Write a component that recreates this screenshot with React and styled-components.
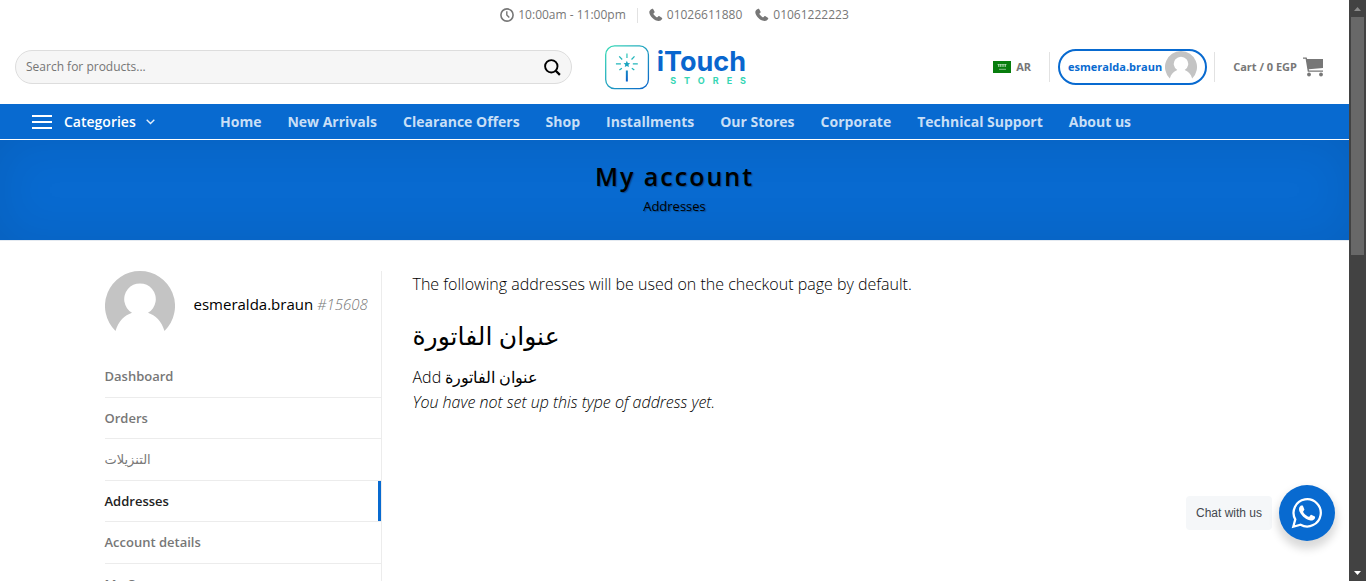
import React from 'react';
import styled, { createGlobalStyle } from 'styled-components';

const BLUE = '#086ad0';

const GlobalStyle = createGlobalStyle`
  *, *::before, *::after { box-sizing: border-box; }
  body {
    margin: 0;
    background: #fff;
    color: #000;
    font-family: 'Open Sans', 'Noto Sans', 'DejaVu Sans', sans-serif;
    font-size: 15px;
    line-height: 25px;
  }
  a { color: inherit; text-decoration: none; }
  h1, h2, p, ul { margin: 0; padding: 0; }
  ul { list-style: none; }
  button { font: inherit; color: inherit; border: 0; background: none; padding: 0; cursor: pointer; }
`;

const Viewport = styled.div`
  display: flex;
  height: 100vh;
  overflow: hidden;
`;

const Page = styled.div`
  flex: 1;
  min-width: 0;
  overflow: hidden;
`;

const ScrollTrack = styled.div`
  flex: none;
  width: 17px;
  display: flex;
  flex-direction: column;
  align-items: center;
  background: #424242;
`;

const ScrollArrow = styled.svg`
  flex: none;
  width: 17px;
  height: 17px;
`;

const ScrollThumb = styled.div`
  width: 13px;
  height: 41%;
  background: #686868;
`;

const ScrollSpace = styled.div`
  flex: 1;
`;

const TopBar = styled.div`
  display: flex;
  justify-content: center;
  align-items: center;
  height: 30px;
  color: #777;
  font-size: 12px;
  line-height: 16px;
`;

const TopItem = styled.a`
  display: flex;
  align-items: center;
  gap: 4px;
  margin-left: ${(p) => p.$gap || 0}px;
`;

const Divider = styled.span`
  flex: none;
  width: 1px;
  height: ${(p) => p.$height}px;
  background: #e2e2e2;
`;

const Header = styled.header`
  display: grid;
  grid-template-columns: 1fr 141px 1fr;
  column-gap: 33px;
  align-items: center;
  height: 74px;
  padding: 0 13px 0 15px;
`;

const SearchForm = styled.form`
  display: flex;
  align-items: center;
  height: 34px;
  padding: 0 10px;
  border: 1px solid #ddd;
  border-radius: 99px;
  background: #f6f6f6;
`;

const SearchInput = styled.input`
  flex: 1;
  min-width: 0;
  border: 0;
  padding: 0;
  outline: 0;
  background: transparent;
  font: inherit;
  font-size: 12px;
  line-height: 20px;
  color: #333;
  &::placeholder { color: #757575; opacity: 1; }
`;

const IconButton = styled.button`
  display: flex;
`;

const Logo = styled.a`
  display: flex;
  align-items: center;
  gap: 7px;
`;

const LogoWords = styled.span`
  display: flex;
  flex-direction: column;
  align-items: flex-end;
  font-family: Inter, sans-serif;
  font-weight: 700;
`;

const LogoName = styled.span`
  color: #0966ce;
  font-size: 27px;
  line-height: 26px;
`;

const LogoSub = styled.span`
  color: #35d6b4;
  font-size: 9px;
  line-height: 11px;
  letter-spacing: 8px;
  margin-right: -8px;
`;

const HeaderTools = styled.div`
  display: flex;
  justify-content: flex-end;
  align-items: center;
  padding-right: 12px;
  color: #777;
  font-size: 11px;
  font-weight: 700;
  line-height: 16px;
`;

const Language = styled.a`
  display: flex;
  align-items: center;
  gap: 5px;
  margin-right: 18px;
`;

const AccountLink = styled.a`
  display: flex;
  align-items: center;
  gap: 3px;
  height: 36px;
  margin: 0 7px 0 8px;
  padding: 0 8px;
  border: 2px solid ${BLUE};
  border-radius: 99px;
  color: ${BLUE};
`;

const CartLink = styled.a`
  display: flex;
  align-items: center;
  gap: 6px;
  margin-left: 18px;
`;

const NavBar = styled.nav`
  display: flex;
  align-items: center;
  height: 36px;
  padding-left: 32px;
  border-bottom: 1px solid #fff;
  background: ${BLUE};
  color: #fff;
  font-size: 14px;
  font-weight: 700;
  line-height: 20px;
`;

const Categories = styled.button`
  display: flex;
  align-items: center;
  width: 188px;
  font-weight: 600;
`;

const CategoriesLabel = styled.span`
  margin: 0 10px 0 12px;
`;

const NavList = styled.ul`
  display: flex;
  gap: 26px;
  color: #c9dff6;
`;

const TitleBand = styled.section`
  height: 101px;
  padding-top: 18px;
  border-bottom: 1px solid #e4eaf1;
  background: ${BLUE};
  box-shadow: inset 0 0 50px rgba(0, 0, 0, 0.09);
  text-align: center;
  text-shadow: 1px 1px 1px rgba(0, 0, 0, 0.3);
`;

const PageTitle = styled.h1`
  font-size: 25px;
  font-weight: 600;
  line-height: 36px;
  letter-spacing: 2px;
`;

const PageSubtitle = styled.p`
  font-size: 13px;
  line-height: 24px;
`;

const Content = styled.main`
  display: flex;
  max-width: 1140px;
  margin: 30px auto 0;
`;

const Sidebar = styled.aside`
  flex: none;
  width: 277px;
  border-right: 1px solid #ececec;
`;

const Profile = styled.div`
  display: flex;
  align-items: center;
  gap: 19px;
  height: 70px;
  margin-bottom: 14px;
  white-space: nowrap;
`;

const UserName = styled.span`
  padding-bottom: 4px;
`;

const UserId = styled.em`
  color: #777;
  font-weight: 300;
`;

const AccountMenu = styled.ul`
  display: grid;
  grid-auto-rows: 1fr;
  height: 249px;
  color: #777;
  font-size: 13px;
  font-weight: 600;
  line-height: 20px;
`;

const MenuItem = styled.li`
  display: flex;
  align-items: center;
  border-top: 1px solid ${(p) => (p.$first ? 'transparent' : '#ececec')};
  box-shadow: ${(p) => (p.$active ? `inset -3px 0 0 ${BLUE}` : 'none')};
  color: ${(p) => (p.$active ? '#222' : 'inherit')};
  font-weight: ${(p) => (p.$regular ? 400 : 'inherit')};
`;

const AddressPanel = styled.section`
  flex: 1;
  min-width: 0;
  padding: 1px 0 0 31px;
  font-size: 16px;
  font-weight: 300;
`;

const AddressTitle = styled.h2`
  margin: 19px 0 11px;
  font-size: 25px;
  font-weight: 500;
  line-height: 38px;
`;

const ChatWidget = styled.div`
  position: fixed;
  right: 31px;
  bottom: 40px;
  display: flex;
  align-items: center;
  gap: 7px;
`;

const ChatLabel = styled.span`
  padding: 7px 10px;
  border-radius: 4px;
  background: #f5f7f9;
  color: #43474e;
  font-family: 'Liberation Sans', Arial, sans-serif;
  font-size: 12px;
  line-height: 20px;
`;

const ChatButton = styled.button`
  display: flex;
  align-items: center;
  justify-content: center;
  width: 56px;
  height: 56px;
  border-radius: 50%;
  background: ${BLUE};
  box-shadow: 0 6px 8px 2px rgba(0, 0, 0, 0.15);
`;

function ClockIcon() {
  return (
    <svg width="14" height="14" viewBox="0 0 14 14" fill="none" stroke="#777">
      <circle cx="7" cy="7" r="6.1" strokeWidth="1.6" />
      <path d="M6.8 3.2V7l2.5 2.6" strokeWidth="1.4" />
    </svg>
  );
}

function PhoneIcon() {
  return (
    <svg width="14" height="14" viewBox="0 0 14 14" fill="#777">
      <path d="M2.800.9c.5-.4 1-.3 1.300.2l1.400 2.300c.3.5.2 1-.2 1.300l-.8.7c-.2.3-.2.6 0 .9.8 1.200 1.800 2.100 3 2.900.3.200.6.200.9 0l.8-.8c.4-.4.9-.4 1.300-.1l2.300 1.500c.5.3.6.9.3 1.300-.8 1.200-2.100 2.100-3.400 2C5.500 12.800.5 8 .3 4.200.2 2.800 1.400 1.600 2.800.9Z" />
    </svg>
  );
}

function SearchIcon() {
  return (
    <svg width="17" height="17" viewBox="0 0 17 17" fill="none" stroke="#000" strokeWidth="1.9">
      <circle cx="7.300" cy="7.300" r="6.200" />
      <path d="m11.700 11.700 4.200 4.200" strokeWidth="2.300" />
    </svg>
  );
}

function LogoMark() {
  return (
    <svg width="45" height="45" viewBox="0 0 45 45" fill="none">
      <defs>
        <linearGradient id="frame" x1="0" y1="0" x2="45" y2="45" gradientUnits="userSpaceOnUse">
          <stop stopColor="#39dfb5" />
          <stop offset="1" stopColor="#0860cc" />
        </linearGradient>
        <linearGradient id="wand" x1="0" y1="8" x2="0" y2="37" gradientUnits="userSpaceOnUse">
          <stop stopColor="#2bcbb5" />
          <stop offset="1" stopColor="#075dcc" />
        </linearGradient>
      </defs>
      <rect x=".7" y=".7" width="43" height="43" rx="9" stroke="url(#frame)" strokeWidth="1.300" />
      <path d="M21 25.500h2v11h-2zM21.500 8.500h1.200v4.500h-1.200z" fill="url(#wand)" />
      <path d="m14.300 11.300 3 3.200M29.700 11.300l-3 3.200M11 18.900h5M28 18.900h5M14.500 25l2.500-1.800M29.500 25l-2.500-1.800" stroke="#22b6bb" strokeWidth="1.300" />
      <path d="m22 15.800 1 2.100 2.300.3-1.700 1.600.5 2.300-2.100-1.100-2.100 1.100.5-2.300-1.700-1.600 2.300-.3z" fill="#1ba5c0" />
    </svg>
  );
}

function SaudiFlag() {
  return (
    <svg width="18" height="12" viewBox="0 0 18 12">
      <rect width="18" height="12" fill="#077d0d" />
      <path d="M4.500 3.500h9M5 5h8M5.500 3v2.800M7.500 3v2.800M10 3v2.800M12.500 3v2.800" stroke="#b9dcba" strokeWidth=".7" />
      <path d="M6 8.300h7" stroke="#a7d2a9" strokeWidth=".8" />
    </svg>
  );
}

function Avatar({ size }) {
  return (
    <svg width={size} height={size} viewBox="0 0 70 70">
      <path d="M35 0a35 35 0 0 1 24.500 60C56.500 50 50.500 44.500 43 41.800a15.800 15.800 0 1 0-16 0C19.500 44.500 13.500 50 10.500 60A35 35 0 0 1 35 0Z" fill="#c4c4c4" />
    </svg>
  );
}

function CartIcon() {
  return (
    <svg width="21" height="20" viewBox="0 0 21 20" fill="#777">
      <path d="M0 .5h3.700l.4 1.500H20v9L5.800 12.300l.2 1.200h14v1.300H4.800L2.600 1.800H0z" />
      <circle cx="6" cy="17.500" r="1.900" />
      <circle cx="18" cy="17.500" r="1.900" />
    </svg>
  );
}

function MenuIcon() {
  return (
    <svg width="20" height="14" viewBox="0 0 20 14" fill="#fff">
      <path d="M0 0h20v2H0zM0 6h20v2H0zM0 12h20v2H0z" />
    </svg>
  );
}

function ChevronIcon() {
  return (
    <svg width="9" height="6" viewBox="0 0 9 6" fill="none" stroke="#e4effb" strokeWidth="1.400">
      <path d="m.7.700 3.800 3.800L8.300.7" />
    </svg>
  );
}

function WhatsAppIcon() {
  return (
    <svg width="32" height="32" viewBox="0 0 24 24" fill="#fff">
      <path d="M17.472 14.382c-.297-.149-1.758-.867-2.030-.967-.273-.099-.471-.148-.67.150-.197.297-.767.966-.940 1.164-.173.199-.347.223-.644.075-.297-.150-1.255-.463-2.390-1.475-.883-.788-1.480-1.761-1.653-2.059-.173-.297-.018-.458.130-.606.134-.133.298-.347.446-.520.149-.174.198-.298.298-.497.099-.198.050-.371-.025-.520-.075-.149-.669-1.612-.916-2.207-.242-.579-.487-.500-.669-.510-.173-.008-.371-.010-.570-.010-.198 0-.520.074-.792.372-.272.297-1.040 1.016-1.040 2.479 0 1.462 1.065 2.875 1.213 3.074.149.198 2.096 3.200 5.077 4.487.709.306 1.262.489 1.694.625.712.227 1.360.195 1.871.118.571-.085 1.758-.719 2.006-1.413.248-.694.248-1.289.173-1.413-.074-.124-.272-.198-.570-.347" />
      <path d="m1.700 22.300 1.500-5.500A10.200 10.200 0 1 1 7.200 20.800z" fill="none" stroke="#fff" strokeWidth="1.700" />
    </svg>
  );
}

const NAV = ['Home', 'New Arrivals', 'Clearance Offers', 'Shop', 'Installments', 'Our Stores', 'Corporate', 'Technical Support', 'About us'];

const MENU = [
  { label: 'Dashboard' },
  { label: 'Orders' },
  { label: 'التنزيلات', regular: true },
  { label: 'Addresses', active: true },
  { label: 'Account details' },
  { label: 'My Coupons' },
];

export default function App() {
  return (
    <>
      <GlobalStyle />
      <Viewport>
        <Page>
          <TopBar>
            <TopItem href="#hours"><ClockIcon />10:00am - 11:00pm</TopItem>
            <TopItem as="span" $gap={11}><Divider $height={15} /></TopItem>
            <TopItem href="tel:01026611880" $gap={11}><PhoneIcon />01026611880</TopItem>
            <TopItem href="tel:01061222223" $gap={13}><PhoneIcon />01061222223</TopItem>
          </TopBar>
          <Header>
            <SearchForm role="search" onSubmit={(e) => e.preventDefault()}>
              <SearchInput type="search" aria-label="Search for products" placeholder="Search for products..." />
              <IconButton type="submit" aria-label="Search"><SearchIcon /></IconButton>
            </SearchForm>
            <Logo href="#home">
              <LogoMark />
              <LogoWords>
                <LogoName>iTouch</LogoName>
                <LogoSub>STORES</LogoSub>
              </LogoWords>
            </Logo>
            <HeaderTools>
              <Language href="#ar"><SaudiFlag />AR</Language>
              <Divider $height={30} />
              <AccountLink href="#account">esmeralda.braun<Avatar size={32} /></AccountLink>
              <Divider $height={30} />
              <CartLink href="#cart">Cart / 0 EGP<CartIcon /></CartLink>
            </HeaderTools>
          </Header>
          <NavBar>
            <Categories type="button">
              <MenuIcon />
              <CategoriesLabel>Categories</CategoriesLabel>
              <ChevronIcon />
            </Categories>
            <NavList>
              {NAV.map((label) => (
                <li key={label}><a href="#nav">{label}</a></li>
              ))}
            </NavList>
          </NavBar>
          <TitleBand>
            <PageTitle>My account</PageTitle>
            <PageSubtitle>Addresses</PageSubtitle>
          </TitleBand>
          <Content>
            <Sidebar>
              <Profile>
                <Avatar size={70} />
                <UserName>esmeralda.braun <UserId>#15608</UserId></UserName>
              </Profile>
              <AccountMenu>
                {MENU.map((item, i) => (
                  <MenuItem key={item.label} $first={i === 0} $active={item.active} $regular={item.regular}>
                    <a href="#menu">{item.label}</a>
                  </MenuItem>
                ))}
              </AccountMenu>
            </Sidebar>
            <AddressPanel>
              <p>The following addresses will be used on the checkout page by default.</p>
              <AddressTitle>عنوان الفاتورة</AddressTitle>
              <p><a href="#edit">Add عنوان الفاتورة</a></p>
              <p><em>You have not set up this type of address yet.</em></p>
            </AddressPanel>
          </Content>
        </Page>
        <ScrollTrack>
          <ScrollArrow viewBox="0 0 17 17"><path d="M5 11h7L8.500 7z" fill="#8b8b8b" /></ScrollArrow>
          <ScrollThumb />
          <ScrollSpace />
          <ScrollArrow viewBox="0 0 17 17"><path d="M5 7h7l-3.500 4z" fill="#fff" /></ScrollArrow>
        </ScrollTrack>
      </Viewport>
      <ChatWidget>
        <ChatLabel>Chat with us</ChatLabel>
        <ChatButton type="button" aria-label="Chat on WhatsApp"><WhatsAppIcon /></ChatButton>
      </ChatWidget>
    </>
  );
}
